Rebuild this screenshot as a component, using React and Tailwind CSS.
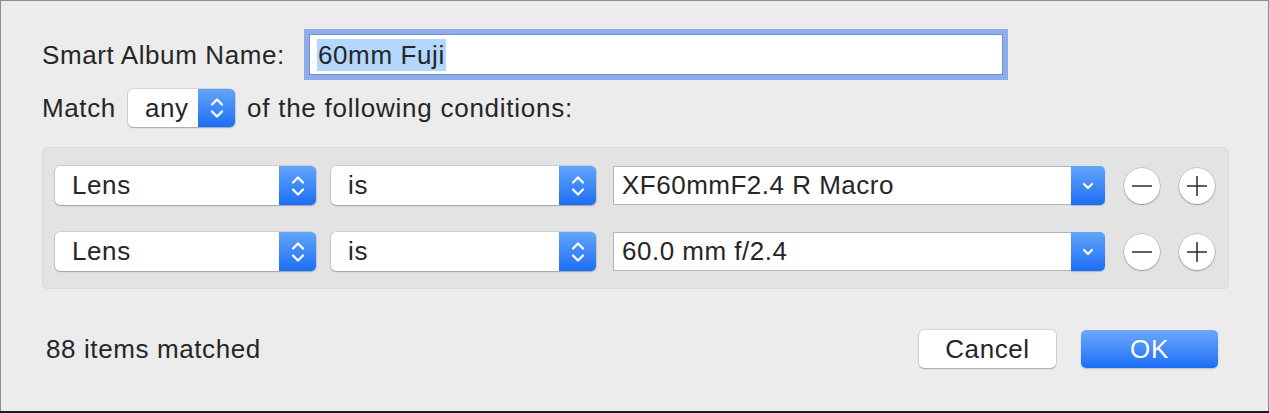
import React from 'react'

const font = { fontFamily: '"Liberation Sans", Arial, sans-serif' }

const Stepper = () => (
  <svg width="16" height="26" viewBox="0 0 16 26" fill="none" stroke="white" strokeWidth="2.2" strokeLinecap="round" strokeLinejoin="round">
    <path d="M3 9.5 L8 4.5 L13 9.5" />
    <path d="M3 16.5 L8 21.5 L13 16.5" />
  </svg>
)

const ChevronDown = () => (
  <svg width="14" height="10" viewBox="0 0 14 10" fill="none" stroke="white" strokeWidth="2.2" strokeLinecap="round" strokeLinejoin="round">
    <path d="M3 3 L7 7 L11 3" />
  </svg>
)

const PopUp = ({ label, width, height = 'h-[39px]', textPad = 'pl-[17px]' }) => (
  <div className={`flex ${height} ${width} rounded-[5px] bg-white shadow-[0_0_0_0.5px_rgba(0,0,0,0.18),0_1px_1.5px_rgba(0,0,0,0.22)] overflow-hidden`}>
    <div className={`flex-1 flex items-center ${textPad} text-[26px] tracking-[0.6px] text-[#262626]`}>{label}</div>
    <div className="w-[37px] flex items-center justify-center bg-gradient-to-b from-[#62a4f9] to-[#1a6df5]">
      <Stepper />
    </div>
  </div>
)

const Combo = ({ value }) => (
  <div className="flex h-[39px] w-[492px]">
    <div className="flex-1 flex items-center pl-[8px] bg-white border border-[#b4b4b4] border-r-0 text-[26px] tracking-[0.5px] text-[#262626]">{value}</div>
    <div className="w-[34px] flex items-center justify-center rounded-r-[5px] bg-gradient-to-b from-[#62a4f9] to-[#1a6df5] shadow-[0_1px_1px_rgba(0,0,0,0.2)]">
      <ChevronDown />
    </div>
  </div>
)

const Circle = ({ plus }) => (
  <div className="w-[36px] h-[36px] rounded-full bg-white shadow-[0_0_0_0.5px_rgba(0,0,0,0.25),0_1px_1.5px_rgba(0,0,0,0.25)] flex items-center justify-center">
    <svg width="24" height="24" viewBox="0 0 24 24" stroke="#2a2a2a" strokeWidth="1.5">
      <path d="M2 12 H22" />
      {plus && <path d="M12 2 V22" />}
    </svg>
  </div>
)

const Row = ({ value }) => (
  <div className="flex items-center h-[39px]">
    <PopUp label="Lens" width="w-[261px]" />
    <div className="w-[15px]" />
    <PopUp label="is" width="w-[265px]" />
    <div className="w-[17px]" />
    <Combo value={value} />
    <div className="w-[19px]" />
    <Circle />
    <div className="w-[19px]" />
    <Circle plus />
  </div>
)

export default function App() {
  return (
    <div style={font} className="w-[1269px] h-[413px] flex flex-col bg-[#ececec] text-[#262626] tracking-[0.6px] overflow-hidden">
      <div className="flex-1 flex flex-col border-t border-l border-r border-[#8c8c8c] pl-[41px]">
        <div className="flex items-center mt-[33px] h-[41px]">
          <div className="w-[267px] text-[26px] pt-[2px]">Smart Album Name:</div>
          <div className="w-[694px] h-[41px] bg-white border border-[#6f8fd3] shadow-[0_0_0_5px_#8fadec] flex items-center pl-[7px]">
            <span className="bg-[#b3d7ff] text-[26px] leading-[32px] px-[1px]">60mm Fuji</span>
          </div>
        </div>

        <div className="flex items-center mt-[14px] h-[38px]">
          <span className="text-[26px] w-[86px]">Match</span>
          <PopUp label="any" width="w-[107px]" height="h-[38px]" />
          <span className="text-[26px] ml-[12px] tracking-[0.75px]">of the following conditions:</span>
        </div>

        <div className="mt-[20px] w-[1187px] h-[142px] rounded-[5px] bg-[#e3e3e3] border border-[#dadada] pl-[12px] pt-[18px] flex flex-col gap-[27px]">
          <Row value="XF60mmF2.4 R Macro" />
          <Row value="60.0 mm f/2.4" />
        </div>

        <div className="flex items-center mt-[41px] h-[38px]">
          <span className="text-[26px] ml-[4px]">88 items matched</span>
          <div className="flex-1" />
          <button className="w-[137px] h-[38px] rounded-[5px] bg-white text-[26px] tracking-[0.6px] text-[#262626] shadow-[0_0_0_0.5px_rgba(0,0,0,0.18),0_1px_1.5px_rgba(0,0,0,0.22)]">Cancel</button>
          <button className="ml-[25px] w-[137px] h-[38px] rounded-[5px] bg-gradient-to-b from-[#6aa8fa] to-[#1a6ef6] text-[26px] tracking-[0.6px] text-white shadow-[0_1px_1.5px_rgba(0,0,0,0.2)]">OK</button>
          <div className="w-[50px]" />
        </div>
      </div>
      <div className="h-[2px] bg-[#1c1c1c]" />
    </div>
  )
}
